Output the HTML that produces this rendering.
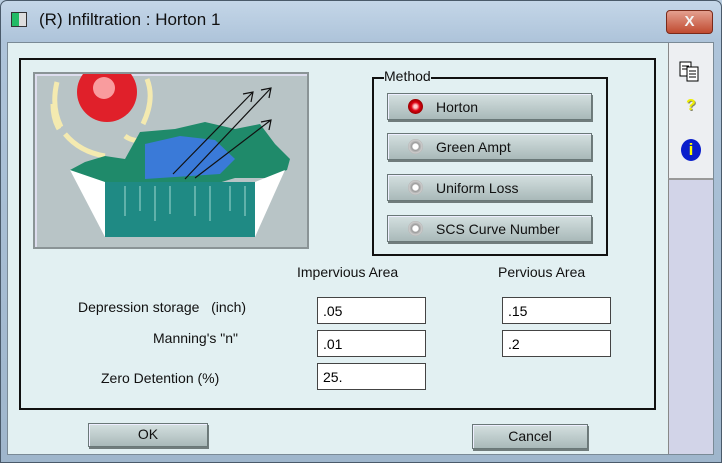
<!DOCTYPE html>
<html><head><meta charset="utf-8"><style>
*{margin:0;padding:0;box-sizing:border-box}
body{width:722px;height:463px;overflow:hidden;background:#b9cde0;font-family:"Liberation Sans",sans-serif;position:relative}
.abs{position:absolute}
.title{left:0;top:0;width:722px;height:463px;border-radius:7px 7px 0 0;background:linear-gradient(#c4d6e8,#aec4da 40px,#9fb6cc);border:1px solid #4a5a6a}
.client{left:7px;top:42px;width:707px;height:413px;background:#e2f0f2;border:1px solid #7a8a96}
.btn{background:linear-gradient(#d4e0e0,#a9b9b9);border:1px solid #6a7878;box-shadow:inset 1px 1px 0 #eef,1px 2px 0 #707c7c;font-size:14px;color:#111}
.field{background:#fff;border:1px solid #444;font-size:14px;padding:5px 0 0 5px;height:27px;width:109px}
.lbl{font-size:14px;color:#111}
.radio{width:15px;height:15px;border-radius:50%;background:radial-gradient(#fff 25%,#999 35%,#ccc 60%,#777);position:absolute;left:20px;top:5px}
</style></head><body>
<div class="abs title"></div>
<div class="abs" style="left:11px;top:12px;width:16px;height:15px;background:linear-gradient(90deg,#2b6 0 50%,#ddd 50%);border:1px solid #333"></div>
<div class="abs" style="left:39px;top:10px;font-size:17px;color:#111">(R) Infiltration : Horton 1</div>
<div class="abs" style="left:666px;top:10px;width:47px;height:24px;border-radius:4px;background:linear-gradient(#e4a090,#c04a30);border:1px solid #7a2a1a;color:#f4f4f4;font-weight:bold;font-size:15px;text-align:center;line-height:22px">X</div>
<div class="abs client"></div>
<div class="abs" style="left:668px;top:43px;width:45px;height:135px;background:#edeff2;border-left:1px solid #888"></div>
<div class="abs" style="left:668px;top:178px;width:45px;height:276px;background:#d2d4e8;border-left:1px solid #888;border-top:2px solid #999"></div>
<svg class="abs" style="left:678px;top:60px" width="24" height="24"><rect x="2" y="2" width="11" height="14" fill="#fff" stroke="#000"/><rect x="9" y="7" width="11" height="14" fill="#fff" stroke="#000"/><path d="M4 6h7M4 9h5M11 11h7M11 14h7M11 17h7" stroke="#000"/></svg>
<div class="abs" style="left:686px;top:97px;font-size:16px;font-weight:bold;color:#ee0;text-shadow:1px 1px 0 #886">?</div>
<div class="abs" style="left:681px;top:139px;width:20px;height:22px;border-radius:50%;background:#0a1ecc;color:#ff0;font-weight:bold;font-size:17px;text-align:center;line-height:22px">i</div>
<div class="abs" style="left:19px;top:58px;width:637px;height:352px;border:2px solid #111"></div>
<div class="abs" style="left:33px;top:72px;width:276px;height:177px;background:#b8c4c6;border:2px solid #8a9496;box-shadow:inset 2px 2px 0 #dde"></div>
<svg class="abs" style="left:35px;top:74px" width="272" height="173">
<g stroke="#f4eab0" stroke-width="5" fill="none"><path d="M22 8q-6 25 4 45M112 5q8 20 -4 45M30 60q15 18 40 22M90 62q10 8 28 2M18 30q0 15 6 25"/></g>
<circle cx="72" cy="18" r="30" fill="#e0202a"/><circle cx="69" cy="14" r="11" fill="#fbb" opacity=".8"/>
<polygon points="35,96 50,88 70,82 90,85 105,58 140,55 170,48 200,55 225,50 240,70 255,85 252,96 230,104 200,104 170,113 60,112 35,96" fill="#1f8a6a"/>
<polygon points="110,70 145,62 180,66 200,85 185,100 110,105" fill="#3a7ad8"/>
<polygon points="35,96 70,108 70,163" fill="#fff"/><polygon points="250,96 220,108 220,163" fill="#fff"/>
<rect x="70" y="108" width="150" height="55" fill="#1f8a84"/>
<g stroke="#a0d8d0" stroke-width="1"><path d="M90 112v30M105 112v25M120 112v35M135 112v28M160 112v30M175 112v35M195 112v25M210 112v30"/></g>
<g stroke="#111" stroke-width="1.2" fill="none"><path d="M138 100L218 18M150 105L236 14M160 104L236 46M208 20l10-2-2 10M226 16l10-2-2 10M226 48l10-2-2 10"/></g>
</svg>
<div class="abs" style="left:372px;top:77px;width:236px;height:179px;border:2px solid #111"></div>
<div class="abs lbl" style="left:384px;top:68px;background:#e2f0f2">Method</div>
<div class="abs btn" style="left:387px;top:93px;width:205px;height:27px"><div class="radio" style="background:radial-gradient(#fcc 15%,#d01 40%,#900 70%,#777)"></div><span class="abs" style="left:48px;top:5px">Horton</span></div>
<div class="abs btn" style="left:387px;top:133px;width:205px;height:27px"><div class="radio"></div><span class="abs" style="left:48px;top:5px">Green Ampt</span></div>
<div class="abs btn" style="left:387px;top:174px;width:205px;height:27px"><div class="radio"></div><span class="abs" style="left:48px;top:5px">Uniform Loss</span></div>
<div class="abs btn" style="left:387px;top:215px;width:205px;height:27px"><div class="radio"></div><span class="abs" style="left:48px;top:5px">SCS Curve Number</span></div>
<div class="abs lbl" style="left:297px;top:264px">Impervious Area</div>
<div class="abs lbl" style="left:498px;top:264px">Pervious Area</div>
<div class="abs lbl" style="left:78px;top:299px">Depression storage&nbsp;&nbsp;&nbsp;(inch)</div>
<div class="abs lbl" style="left:153px;top:330px">Manning's "n"</div>
<div class="abs lbl" style="left:101px;top:370px">Zero Detention (%)</div>
<div class="abs field" style="left:317px;top:297px">.05</div>
<div class="abs field" style="left:317px;top:330px">.01</div>
<div class="abs field" style="left:317px;top:363px">25.</div>
<div class="abs field" style="left:502px;top:297px">.15</div>
<div class="abs field" style="left:502px;top:330px">.2</div>
<div class="abs btn" style="left:88px;top:423px;width:120px;height:24px;text-align:center;line-height:20px">OK</div>
<div class="abs btn" style="left:472px;top:424px;width:116px;height:25px;text-align:center;line-height:23px">Cancel</div>
</body></html>
